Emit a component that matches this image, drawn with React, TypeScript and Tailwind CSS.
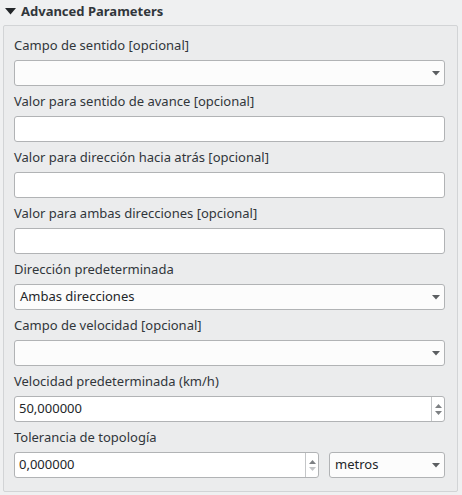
import React from "react";

const font = { fontFamily: '"Noto Sans", "Open Sans", sans-serif' };

function Arrow() {
  return (
    <svg width="8" height="5" viewBox="0 0 8 5" className="shrink-0">
      <path d="M0 0 L8 0 L4 4.5 Z" fill="#5b5e61" />
    </svg>
  );
}

function Combo({ value = "" }: { value?: string }) {
  return (
    <div className="flex h-[26px] items-center justify-between rounded-[3px] border border-[#b1b3b5] bg-[#fcfcfc] pl-[5px] pr-[4px] text-[13px] text-[#232629]">
      <span>{value}</span>
      <Arrow />
    </div>
  );
}

function TextBox() {
  return <div className="h-[26px] rounded-[3px] border border-[#b1b3b5] bg-white" />;
}

function Spin({ value, downDisabled = false }: { value: string; downDisabled?: boolean }) {
  return (
    <div className="flex h-[26px] items-stretch rounded-[3px] border border-[#b1b3b5] bg-white text-[13px] text-[#232629]">
      <div className="flex flex-1 items-center pl-[4px]">{value}</div>
      <div className="flex w-[13px] flex-col items-center justify-center gap-[3px] border-l border-[#c4c6c8]">
        <svg width="7" height="4" viewBox="0 0 7 4">
          <path d="M0 4 L7 4 L3.5 0 Z" fill="#7d8083" />
        </svg>
        <svg width="7" height="4" viewBox="0 0 7 4">
          <path d="M0 0 L7 0 L3.5 4 Z" fill={downDisabled ? "#c3c5c7" : "#7d8083"} />
        </svg>
      </div>
    </div>
  );
}

function Field({ label, children }: { label: string; children: React.ReactNode }) {
  return (
    <div className="flex flex-col gap-[5px]">
      <div className="h-[20px] text-[13px] leading-[20px] text-[#31363b]">{label}</div>
      {children}
    </div>
  );
}

export default function App() {
  return (
    <div className="h-[495px] w-[462px] bg-[#eff0f1] pl-[3px] pr-[4px]" style={font}>
      <div className="flex h-[25px] items-center gap-[5px] pl-[2px] pb-[2px]">
        <svg width="11" height="7" viewBox="0 0 11 7">
          <path d="M0 0 L11 0 L5.5 6.5 Z" fill="#232629" />
        </svg>
        <span className="text-[13px] font-bold text-[#31363b]">Advanced Parameters</span>
      </div>
      <div className="flex h-[467px] flex-col gap-[5px] rounded-[2px] border border-[#d2d4d6] bg-[#ebeced] pl-[10px] pr-[12px] pt-[9px]">
        <Field label="Campo de sentido [opcional]">
          <Combo />
        </Field>
        <Field label="Valor para sentido de avance [opcional]">
          <TextBox />
        </Field>
        <Field label="Valor para dirección hacia atrás [opcional]">
          <TextBox />
        </Field>
        <Field label="Valor para ambas direcciones [opcional]">
          <TextBox />
        </Field>
        <Field label="Dirección predeterminada">
          <Combo value="Ambas direcciones" />
        </Field>
        <Field label="Campo de velocidad [opcional]">
          <Combo />
        </Field>
        <Field label="Velocidad predeterminada (km/h)">
          <Spin value="50,000000" />
        </Field>
        <Field label="Tolerancia de topología">
          <div className="flex gap-[10px]">
            <div className="w-[305px]">
              <Spin value="0,000000" downDisabled />
            </div>
            <div className="flex-1">
              <Combo value="metros" />
            </div>
          </div>
        </Field>
      </div>
    </div>
  );
}
